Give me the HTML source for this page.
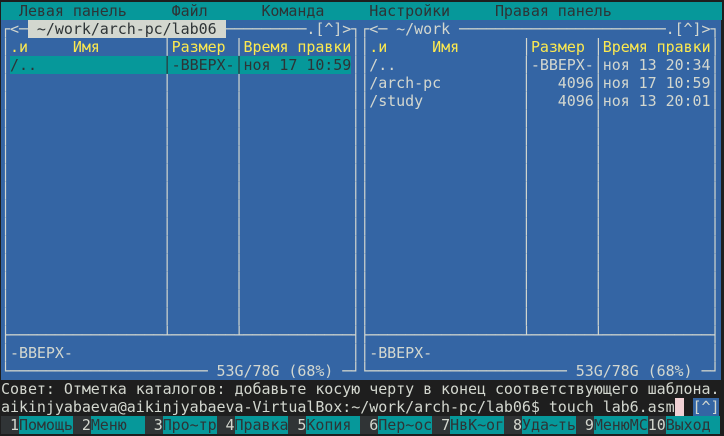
<!DOCTYPE html>
<html><head><meta charset="utf-8"><style>
html,body{margin:0;padding:0;width:724px;height:436px;overflow:hidden;background:#1e1e1e;}
#t{position:absolute;left:1px;top:2px;font-family:"DejaVu Sans Mono","Liberation Mono",monospace;font-size:15px;line-height:18px;color:#d3d7cf;letter-spacing:-0.05px;}
.r{height:18px;width:724px;white-space:pre;overflow:hidden;}
.m{background:#06989a;color:#2e3436;width:721px;}
.b{background:#3465a4;width:720px;}
.y{color:#fce94f;}
.h{background:#06989a;color:#2e3436;}
.p{background:#d3d7cf;color:#2e3436;}
.k{background:#1e1e1e;color:#d3d7cf;}
.n{background:#303436;color:#d3d7cf;}
.c{background:#f0d0d4;}
.u{background:#3465a4;color:#d3d7cf;}
</style></head><body><div id="t"><div class="r m">  Левая панель     Файл      Команда     Настройки     Правая панель          </div><div class="r b">┌&lt;─<span class="p"> ~/work/arch-pc/lab06 </span>─────────.[^]&gt;┐┌&lt;─ ~/work ───────────────────────.[^]&gt;┐</div><div class="r b">│<span class="y">.и     Имя       </span>│<span class="y">Размер </span>│<span class="y">Время правки</span>││<span class="y">.и     Имя       </span>│<span class="y">Размер </span>│<span class="y">Время правки</span>│</div><div class="r b">│<span class="h">/..              │-ВВЕРХ-│ноя 17 10:59</span>││/..              │-ВВЕРХ-│ноя 13 20:34│</div><div class="r b">│                 │       │            ││/arch-pc         │   4096│ноя 17 10:59│</div><div class="r b">│                 │       │            ││/study           │   4096│ноя 13 20:01│</div><div class="r b">│                 │       │            ││                 │       │            │</div><div class="r b">│                 │       │            ││                 │       │            │</div><div class="r b">│                 │       │            ││                 │       │            │</div><div class="r b">│                 │       │            ││                 │       │            │</div><div class="r b">│                 │       │            ││                 │       │            │</div><div class="r b">│                 │       │            ││                 │       │            │</div><div class="r b">│                 │       │            ││                 │       │            │</div><div class="r b">│                 │       │            ││                 │       │            │</div><div class="r b">│                 │       │            ││                 │       │            │</div><div class="r b">│                 │       │            ││                 │       │            │</div><div class="r b">│                 │       │            ││                 │       │            │</div><div class="r b">│                 │       │            ││                 │       │            │</div><div class="r b">├─────────────────┴───────┴────────────┤├─────────────────┴───────┴────────────┤</div><div class="r b">│-ВВЕРХ-                               ││-ВВЕРХ-                               │</div><div class="r b">└────────────────────── 53G/78G (68%) ─┘└────────────────────── 53G/78G (68%) ─┘</div><div class="r k">Совет: Отметка каталогов: добавьте косую черту в конец соответствующего шаблона.</div><div class="r k">aikinjyabaeva@aikinjyabaeva-VirtualBox:~/work/arch-pc/lab06$ touch lab6.asm<span class="c"> </span> <span class="u">[^]</span></div><div class="r k"><span class="n"> 1</span><span class="h">Помощь</span><span class="n"> 2</span><span class="h">Меню  </span><span class="n"> 3</span><span class="h">Про~тр</span><span class="n"> 4</span><span class="h">Правка</span><span class="n"> 5</span><span class="h">Копия </span><span class="n"> 6</span><span class="h">Пер~ос</span><span class="n"> 7</span><span class="h">НвК~ог</span><span class="n"> 8</span><span class="h">Уда~ть</span><span class="n"> 9</span><span class="h">МенюМС</span><span class="n">10</span><span class="h">Выход </span></div></div></body></html>
